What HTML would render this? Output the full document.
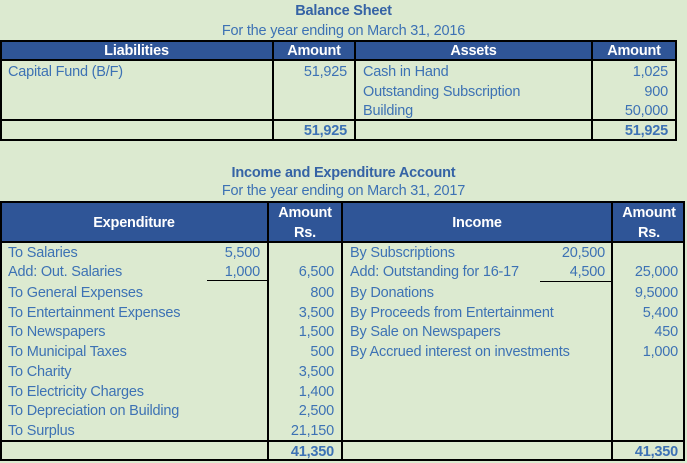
<!DOCTYPE html>
<html><head><meta charset="utf-8"><style>
body{margin:0;width:687px;height:463px;background:#dcead0;overflow:hidden;position:relative;font-family:"Liberation Sans",sans-serif;font-size:14.5px;color:#3d72b4;letter-spacing:-0.2px}
div{position:absolute;white-space:nowrap}
.t{line-height:17px;margin-top:2px}
.b{font-weight:bold}
.h{background:#2f5597}
.hl{background:#000;height:2px}
.vl{background:#000;width:2px}
.w{color:#fff;font-weight:bold}
.r{text-align:right}
.c{text-align:center}
</style></head><body>
<div class="t b c" style="left:0;width:687px;top:1px;color:#3563a5">Balance Sheet</div>
<div class="t c" style="left:0;width:687px;top:21px">For the year ending on March 31, 2016</div>
<div class="h" style="left:0;top:40px;width:677px;height:20px"></div>
<div class="hl" style="left:0;top:40px;width:677px"></div>
<div class="hl" style="left:0;top:59px;width:677px"></div>
<div class="hl" style="left:0;top:119px;width:677px"></div>
<div class="hl" style="left:0;top:139px;width:677px"></div>
<div class="vl" style="left:0;top:40px;height:101px"></div>
<div class="vl" style="left:272px;top:40px;height:101px"></div>
<div class="vl" style="left:354px;top:40px;height:101px"></div>
<div class="vl" style="left:591px;top:40px;height:101px"></div>
<div class="vl" style="left:675px;top:40px;height:101px"></div>
<div class="t w c" style="left:0;width:273px;top:41px">Liabilities</div>
<div class="t w c" style="left:274px;width:80px;top:41px">Amount</div>
<div class="t w c" style="left:356px;width:235px;top:41px">Assets</div>
<div class="t w c" style="left:593px;width:82px;top:41px">Amount</div>
<div class="t" style="left:8px;top:62px">Capital Fund (B/F)</div>
<div class="t r" style="right:340px;top:62px">51,925</div>
<div class="t" style="left:363px;top:62px">Cash in Hand</div>
<div class="t" style="left:363px;top:82px">Outstanding Subscription</div>
<div class="t" style="left:363px;top:101px">Building</div>
<div class="t r" style="right:19px;top:62px">1,025</div>
<div class="t r" style="right:19px;top:82px">900</div>
<div class="t r" style="right:19px;top:101px">50,000</div>
<div class="t b r" style="right:340px;top:121px">51,925</div>
<div class="t b r" style="right:19px;top:121px">51,925</div>
<div class="t b c" style="left:0;width:687px;top:163px;color:#3563a5">Income and Expenditure Account</div>
<div class="t c" style="left:0;width:687px;top:181px">For the year ending on March 31, 2017</div>
<div class="h" style="left:0;top:201px;width:685px;height:41px"></div>
<div class="hl" style="left:0;top:201px;width:685px"></div>
<div class="hl" style="left:0;top:241px;width:685px"></div>
<div class="hl" style="left:0;top:440px;width:685px"></div>
<div class="hl" style="left:0;top:459px;width:685px"></div>
<div class="vl" style="left:0;top:201px;height:260px"></div>
<div class="vl" style="left:267px;top:201px;height:260px"></div>
<div class="vl" style="left:341px;top:201px;height:260px"></div>
<div class="vl" style="left:611px;top:201px;height:260px"></div>
<div class="vl" style="left:683px;top:201px;height:260px"></div>
<div class="t w c" style="left:0;width:268px;top:213px">Expenditure</div>
<div class="t w c" style="left:269px;width:72px;top:203px">Amount</div>
<div class="t w c" style="left:269px;width:72px;top:223px">Rs.</div>
<div class="t w c" style="left:343px;width:268px;top:213px">Income</div>
<div class="t w c" style="left:613px;width:72px;top:203px">Amount</div>
<div class="t w c" style="left:613px;width:72px;top:223px">Rs.</div>
<div class="hl" style="left:207px;top:280px;width:62px;height:1px"></div>
<div class="hl" style="left:540px;top:281px;width:72px;height:1px"></div>
<div class="t" style="left:8px;top:243px">To Salaries</div>
<div class="t" style="left:8px;top:262px">Add: Out. Salaries</div>
<div class="t" style="left:8px;top:283px">To General Expenses</div>
<div class="t" style="left:8px;top:303px">To Entertainment Expenses</div>
<div class="t" style="left:8px;top:322px">To Newspapers</div>
<div class="t" style="left:8px;top:342px">To Municipal Taxes</div>
<div class="t" style="left:8px;top:362px">To Charity</div>
<div class="t" style="left:8px;top:382px">To Electricity Charges</div>
<div class="t" style="left:8px;top:401px">To Depreciation on Building</div>
<div class="t" style="left:8px;top:421px">To Surplus</div>
<div class="t r" style="right:427px;top:243px">5,500</div>
<div class="t r" style="right:427px;top:262px">1,000</div>
<div class="t r" style="right:353px;top:262px">6,500</div>
<div class="t r" style="right:353px;top:283px">800</div>
<div class="t r" style="right:353px;top:303px">3,500</div>
<div class="t r" style="right:353px;top:322px">1,500</div>
<div class="t r" style="right:353px;top:342px">500</div>
<div class="t r" style="right:353px;top:362px">3,500</div>
<div class="t r" style="right:353px;top:382px">1,400</div>
<div class="t r" style="right:353px;top:401px">2,500</div>
<div class="t r" style="right:353px;top:421px">21,150</div>
<div class="t b r" style="right:353px;top:442px">41,350</div>
<div class="t" style="left:350px;top:243px">By Subscriptions</div>
<div class="t" style="left:350px;top:262px">Add: Outstanding for 16-17</div>
<div class="t" style="left:350px;top:283px">By Donations</div>
<div class="t" style="left:350px;top:303px">By Proceeds from Entertainment</div>
<div class="t" style="left:350px;top:322px">By Sale on Newspapers</div>
<div class="t" style="left:350px;top:342px">By Accrued interest on investments</div>
<div class="t r" style="right:82px;top:243px">20,500</div>
<div class="t r" style="right:82px;top:262px">4,500</div>
<div class="t r" style="right:9px;top:262px">25,000</div>
<div class="t r" style="right:9px;top:283px">9,5000</div>
<div class="t r" style="right:9px;top:303px">5,400</div>
<div class="t r" style="right:9px;top:322px">450</div>
<div class="t r" style="right:9px;top:342px">1,000</div>
<div class="t b r" style="right:9px;top:442px">41,350</div>
</body></html>
